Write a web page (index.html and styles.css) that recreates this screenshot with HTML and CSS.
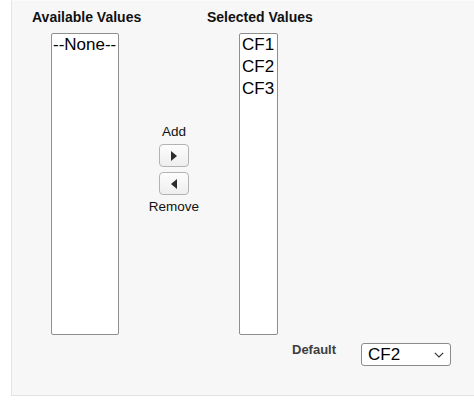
FILE: index.html
```html
<!DOCTYPE html>
<html lang="en">
<head>
<meta charset="utf-8">
<title>Picklist values</title>
<link rel="stylesheet" href="styles.css">
</head>
<body>
<div class="panel">
  <div class="headings">
    <div class="heading heading-available">Available Values</div>
    <div class="heading">Selected Values</div>
  </div>
  <div class="picker">
    <div class="listbox listbox-available">
      <div class="option">--None--</div>
    </div>
    <div class="mover">
      <div class="mover-label">Add</div>
      <button class="mover-btn mover-btn-add" type="button" aria-label="Add">
        <svg width="6" height="10" viewBox="0 0 6 10"><path d="M0 0 L6 5 L0 10 Z" fill="#2b2b2b"/></svg>
      </button>
      <button class="mover-btn mover-btn-remove" type="button" aria-label="Remove">
        <svg width="6" height="10" viewBox="0 0 6 10"><path d="M6 0 L0 5 L6 10 Z" fill="#2b2b2b"/></svg>
      </button>
      <div class="mover-label mover-label-remove">Remove</div>
    </div>
    <div class="listbox listbox-selected">
      <div class="option">CF1</div>
      <div class="option">CF2</div>
      <div class="option">CF3</div>
    </div>
  </div>
  <div class="default-row">
    <div class="default-label">Default</div>
    <div class="select">
      <span class="select-value">CF2</span>
      <svg class="select-chevron" width="10" height="6" viewBox="0 0 10 6"><path d="M0.8 0.8 L5 4.9 L9.2 0.8" fill="none" stroke="#333" stroke-width="1.1"/></svg>
    </div>
  </div>
</div>
</body>
</html>
```

FILE: styles.css
```css
html, body {
  margin: 0;
  padding: 0;
  background: #ffffff;
}

body {
  font-family: "Liberation Sans", Arial, sans-serif;
  color: #000;
  width: 474px;
  height: 402px;
  overflow: hidden;
}

.panel {
  margin-left: 11px;
  box-sizing: border-box;
  height: 396px;
  background: #f7f7f7;
  border-left: 1px solid #e4e4e4;
  border-bottom: 1px solid #e2e2e2;
  border-top: 1px solid #fbfbfb;
  padding: 8px 0 0 20px;
}

.headings {
  display: flex;
  margin-bottom: 7px;
}

.heading {
  font-size: 14px;
  font-weight: bold;
  line-height: 17px;
  color: #111;
}

.heading-available {
  width: 175px;
}

.picker {
  display: flex;
  align-items: flex-start;
}

.listbox {
  box-sizing: border-box;
  height: 302px;
  background: #fff;
  border: 1px solid #8e8e8e;
  border-radius: 2px;
  font-size: 17px;
  line-height: 22px;
  color: #000;
}

.listbox-available {
  margin-left: 19px;
  width: 68px;
  padding-left: 1px;
}

.listbox-selected {
  width: 39px;
  padding-left: 2px;
}

.mover {
  width: 60px;
  margin-left: 25px;
  margin-right: 35px;
  margin-top: 90px;
  display: flex;
  flex-direction: column;
  align-items: center;
}

.mover-label {
  font-size: 13.5px;
  line-height: 17px;
  color: #111;
}

.mover-btn {
  box-sizing: border-box;
  width: 30px;
  height: 23px;
  margin: 4px 0 0;
  padding: 0;
  border: 1px solid #b3b3b3;
  border-radius: 4px;
  background: linear-gradient(#fdfdfd, #eeeeee);
  display: flex;
  align-items: center;
  justify-content: center;
}

.mover-btn-remove {
  margin-top: 5px;
}

.mover-label-remove {
  margin-top: 3px;
}

.default-row {
  display: flex;
  align-items: flex-start;
  margin-top: 7px;
  margin-left: 260px;
}

.default-label {
  font-size: 13px;
  font-weight: bold;
  line-height: 16px;
  color: #3e3e3e;
}

.select {
  box-sizing: border-box;
  width: 90px;
  height: 23px;
  margin-left: 25px;
  margin-top: 1px;
  padding: 0 6px 0 6px;
  background: #fff;
  border: 1px solid #8b8b8b;
  border-radius: 3px;
  display: flex;
  align-items: center;
  justify-content: space-between;
  font-size: 17px;
  line-height: 21px;
}

.select-chevron {
  display: block;
}
```
